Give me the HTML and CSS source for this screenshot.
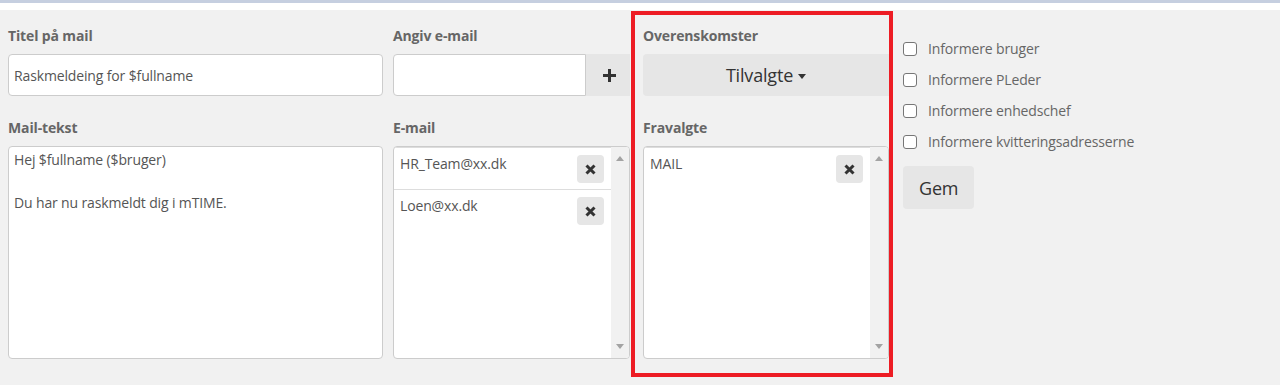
FILE: index.html
```html
<!DOCTYPE html>
<html lang="da">
<head>
<meta charset="utf-8">
<title>Mail</title>
<link rel="stylesheet" href="styles.css">
</head>
<body>
<div class="topbar"></div>
<div class="whitebar"></div>
<main class="page">
  <section class="col col-title">
    <label class="lbl">Titel på mail</label>
    <input class="field" type="text" value="Raskmeldeing for $fullname">
    <label class="lbl lbl-gap">Mail-tekst</label>
    <textarea class="area">Hej $fullname ($bruger)

Du har nu raskmeldt dig i mTIME.</textarea>
  </section>

  <section class="col col-email">
    <label class="lbl">Angiv e-mail</label>
    <div class="group">
      <input class="field field-grp" type="text">
      <button class="btn-add" type="button"><svg width="13" height="13" viewBox="0 0 13 13"><path d="M6.5 0V13M0 6.5H13" stroke="#333" stroke-width="3"/></svg></button>
    </div>
    <label class="lbl lbl-gap">E-mail</label>
    <div class="listbox">
      <ul class="list">
        <li class="item"><span class="item-text">HR_Team@xx.dk</span><button class="btn-x" type="button"><svg width="11" height="11" viewBox="0 0 11 11"><path d="M1.5 1.5L9.5 9.5M9.5 1.5L1.5 9.5" stroke="#333" stroke-width="3"/></svg></button></li>
        <li class="item"><span class="item-text">Loen@xx.dk</span><button class="btn-x" type="button"><svg width="11" height="11" viewBox="0 0 11 11"><path d="M1.5 1.5L9.5 9.5M9.5 1.5L1.5 9.5" stroke="#333" stroke-width="3"/></svg></button></li>
      </ul>
      <div class="sb"><span class="arr arr-up"></span><span class="arr arr-down"></span></div>
    </div>
  </section>

  <section class="col col-agree">
    <label class="lbl">Overenskomster</label>
    <button class="btn-drop" type="button">Tilvalgte <span class="caret"></span></button>
    <label class="lbl lbl-gap">Fravalgte</label>
    <div class="listbox">
      <ul class="list">
        <li class="item"><span class="item-text">MAIL</span><button class="btn-x" type="button"><svg width="11" height="11" viewBox="0 0 11 11"><path d="M1.5 1.5L9.5 9.5M9.5 1.5L1.5 9.5" stroke="#333" stroke-width="3"/></svg></button></li>
      </ul>
      <div class="sb"><span class="arr arr-up"></span><span class="arr arr-down"></span></div>
    </div>
  </section>

  <section class="col col-opts">
    <label class="opt"><input class="cb" type="checkbox">Informere bruger</label>
    <label class="opt"><input class="cb" type="checkbox">Informere PLeder</label>
    <label class="opt"><input class="cb" type="checkbox">Informere enhedschef</label>
    <label class="opt"><input class="cb" type="checkbox">Informere kvitteringsadresserne</label>
    <button class="btn-save" type="button">Gem</button>
  </section>
</main>
</body>
</html>
```

FILE: styles.css
```css
* { box-sizing: border-box; letter-spacing: -0.01em; }
html, body {
  margin: 0;
  padding: 0;
  background: #f1f1f1;
  font-family: "Open Sans", "Liberation Sans", sans-serif;
  color: #555;
}
.topbar { height: 3px; background: #c6cfe0; }
.whitebar { height: 7px; background: #fff; }

.page {
  display: flex;
  align-items: flex-start;
  padding-top: 1px;
}
.col { display: flex; flex-direction: column; }
.col-title { width: 393px; padding: 15px 10px 0 8px; }
.col-email { width: 238px; padding: 15px 1px 0 0; }
.col-agree {
  width: 262px;
  border: 4px solid #ed1c24;
  padding: 11px 0 14px 8px;
}
.col-opts { padding: 22px 0 0 10px; align-items: flex-start; }

.lbl {
  display: block;
  font-size: 14px;
  line-height: 20px;
  font-weight: 700;
  color: #666;
  margin-bottom: 8px;
}
.lbl-gap { margin-top: 22px; }

.field {
  display: block;
  width: 100%;
  height: 42px;
  border: 1px solid #ccc;
  border-radius: 4px;
  background: #fff;
  padding: 0 5px;
  font-family: inherit;
  font-size: 14px;
  color: #555;
  outline: none;
}
.group { display: flex; height: 42px; }
.field-grp { flex: 1; border-radius: 4px 0 0 4px; }
.btn-add {
  width: 44px;
  height: 42px;
  border: none;
  background: #e6e6e6;
  display: flex;
  align-items: center;
  justify-content: center;
  padding: 0 0 0 2px;
}

.area {
  display: block;
  width: 100%;
  height: 213px;
  border: 1px solid #ccc;
  border-radius: 4px;
  background: #fff;
  padding: 2px 5px;
  font-family: inherit;
  font-size: 14px;
  line-height: 21.7px;
  color: #555;
  resize: none;
  outline: none;
}

.listbox {
  display: flex;
  height: 213px;
  border: 1px solid #ccc;
  border-radius: 4px;
  background: #fff;
  overflow: hidden;
}
.list { flex: 1; margin: 0; padding: 0; list-style: none; }
.item {
  display: flex;
  justify-content: space-between;
  align-items: flex-start;
  padding: 7px 7px 6px 6px;
  border-top: 1px solid #ddd;
  font-size: 14px;
  line-height: 20px;
  color: #555;
}
.item-text { margin-top: -1px; }
.btn-x {
  width: 27px;
  height: 28px;
  border: none;
  border-radius: 4px;
  background: #e6e6e6;
  display: flex;
  align-items: center;
  justify-content: center;
  padding: 0;
}
.sb {
  width: 18px;
  background: #f1f1f1;
  display: flex;
  flex-direction: column;
  justify-content: space-between;
  align-items: center;
  padding: 9px 0 9px 0;
}
.arr { width: 0; height: 0; border-left: 4px solid transparent; border-right: 4px solid transparent; }
.arr-up { border-bottom: 5px solid #a3a3a3; }
.arr-down { border-top: 5px solid #a3a3a3; }

.btn-drop {
  height: 42px;
  width: 100%;
  border: none;
  border-radius: 4px 0 0 4px;
  background: #e6e6e6;
  font-family: inherit;
  font-size: 18px;
  color: #333;
  display: flex;
  align-items: center;
  justify-content: center;
  padding: 0;
}
.caret {
  display: inline-block;
  width: 0;
  height: 0;
  margin-left: 5px;
  margin-top: 2px;
  border-top: 5px solid #333;
  border-left: 4px solid transparent;
  border-right: 4px solid transparent;
}

.opt {
  display: flex;
  align-items: center;
  height: 31px;
  font-size: 14px;
  color: #666;
}
.cb {
  appearance: none;
  -webkit-appearance: none;
  width: 14px;
  height: 14px;
  margin: 0 11px 0 0;
  border: 1px solid #767676;
  border-radius: 3px;
  background: #fff;
}
.btn-save {
  margin-top: 9px;
  height: 43px;
  padding: 0 16px;
  border: none;
  border-radius: 4px;
  background: #e6e6e6;
  font-family: inherit;
  font-size: 18px;
  color: #333;
}
```
